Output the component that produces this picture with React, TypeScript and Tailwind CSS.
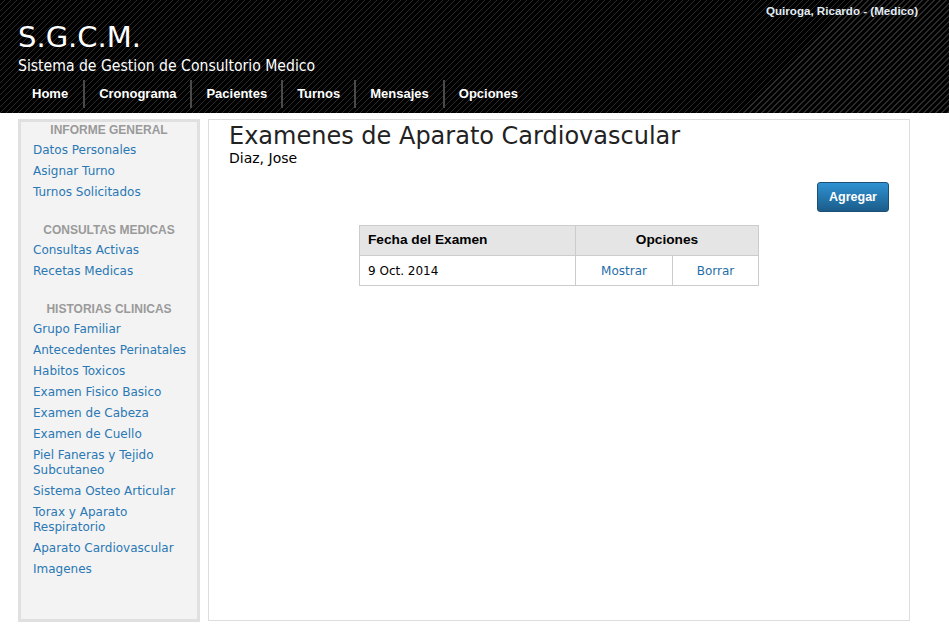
export default function App() {
  const groups: { title: string; items: string[] }[] = [
    { title: "INFORME GENERAL", items: ["Datos Personales", "Asignar Turno", "Turnos Solicitados"] },
    { title: "CONSULTAS MEDICAS", items: ["Consultas Activas", "Recetas Medicas"] },
    {
      title: "HISTORIAS CLINICAS",
      items: [
        "Grupo Familiar",
        "Antecedentes Perinatales",
        "Habitos Toxicos",
        "Examen Fisico Basico",
        "Examen de Cabeza",
        "Examen de Cuello",
        "Piel Faneras y Tejido Subcutaneo",
        "Sistema Osteo Articular",
        "Torax y Aparato Respiratorio",
        "Aparato Cardiovascular",
        "Imagenes",
      ],
    },
  ];
  const nav = ["Home", "Cronograma", "Pacientes", "Turnos", "Mensajes", "Opciones"];

  return (
    <div className="min-h-[632px] bg-white font-['DejaVu_Sans',sans-serif]">
      <header className="h-[113px] bg-[repeating-linear-gradient(135deg,#000_0px,#000_3.2px,#2c2c2c_3.2px,#2c2c2c_4.24px)] pl-[18px] pr-[31px] pt-[4px]">
        <div className="flex justify-end">
          <span className="font-['Liberation_Sans',sans-serif] text-[11.6px] font-bold leading-[13px] text-[#e2ecf5]">
            Quiroga, Ricardo - (Medico)
          </span>
        </div>
        <div className="mt-[3px] text-[29px] leading-[34px] text-white">S.G.C.M.</div>
        <div className="mt-[2px] font-['DejaVu_Sans_Condensed','DejaVu_Sans',sans-serif] text-[15.6px] leading-[20px] text-white">
          Sistema de Gestion de Consultorio Medico
        </div>
        <nav className="mt-[4px] flex h-[28px] items-center font-['Liberation_Sans',sans-serif] text-[13px] font-bold text-white">
          {nav.map((n, i) => (
            <div
              key={n}
              className={
                i === 0
                  ? "flex h-full items-center pl-[14px] pr-[15px]"
                  : "flex h-full items-center border-l-2 border-[#4a4a4a] px-[14px]"
              }
            >
              {n}
            </div>
          ))}
        </nav>
      </header>

      <div className="flex gap-[8px] pl-[18px] pt-[6px]">
        <aside className="h-[503px] w-[182px] border-[3px] border-[#e0e0e0] bg-[#f3f3f3] pt-[1px]">
          {groups.map((g, gi) => (
            <div key={g.title} className={gi === 0 ? "" : "mt-[20px]"}>
              <div className="mb-[2px] text-center font-['Liberation_Sans',sans-serif] text-[12px] font-bold leading-[15px] text-[#9a9a9a]">
                {g.title}
              </div>
              {g.items.map((it) => (
                <div key={it} className="py-[3px] pl-[12px] pr-[8px] text-[12px] leading-[15px] text-[#2a78b4]">
                  {it}
                </div>
              ))}
            </div>
          ))}
        </aside>

        <main className="h-[502px] w-[702px] border border-[#dddddd] bg-white px-[20px]">
          <h1 className="mt-[1px] text-[24px] leading-[30px] text-[#222]">Examenes de Aparato Cardiovascular</h1>
          <div className="-mt-[1px] text-[14px] leading-[16px] text-black">Diaz, Jose</div>
          <div className="mt-[16px] flex justify-end">
            <button className="h-[30px] w-[72px] rounded-[3px] border border-[#1c4f74] bg-[linear-gradient(#2f92d2,#1b5c8a)] font-['Liberation_Sans',sans-serif] text-[12.5px] font-bold text-white">
              Agregar
            </button>
          </div>
          <div className="mt-[13px] flex justify-center">
            <table className="w-[400px] border-collapse border border-[#cccccc] text-[12px]">
              <thead>
                <tr className="h-[30px] bg-[#e5e5e5] font-['Liberation_Sans',sans-serif] text-[13.7px] font-bold text-black">
                  <th className="w-[216px] border border-[#cccccc] pl-[8px] text-left font-bold">Fecha del Examen</th>
                  <th colSpan={2} className="border border-[#cccccc] text-center font-bold">
                    Opciones
                  </th>
                </tr>
              </thead>
              <tbody>
                <tr className="h-[30px]">
                  <td className="border border-[#cccccc] pl-[8px] text-black">9 Oct. 2014</td>
                  <td className="w-[97px] border border-[#cccccc] text-center text-[#1f6ea8]">Mostrar</td>
                  <td className="border border-[#cccccc] text-center text-[#1f6ea8]">Borrar</td>
                </tr>
              </tbody>
            </table>
          </div>
        </main>
      </div>
    </div>
  );
}
